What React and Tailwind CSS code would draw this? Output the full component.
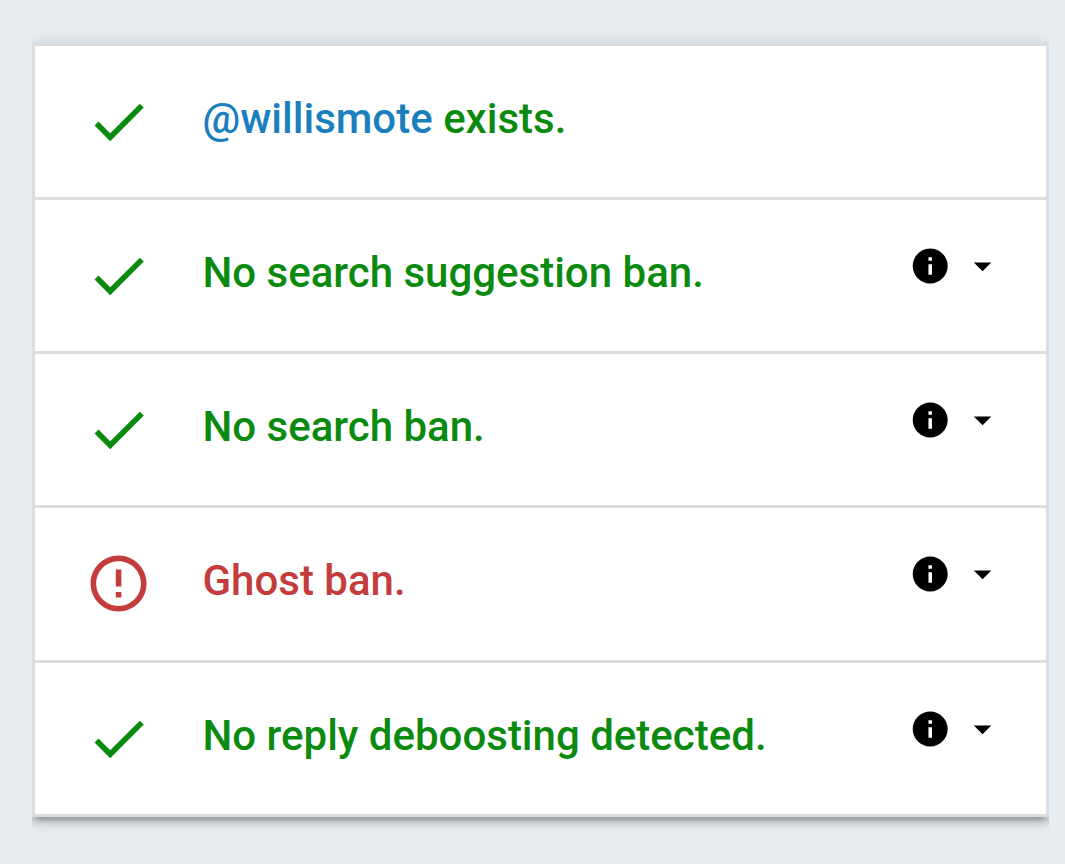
const rows = [
  { handle: '@willismote', text: ' exists.', ok: true, info: false },
  { text: 'No search suggestion ban.', ok: true, info: true },
  { text: 'No search ban.', ok: true, info: true },
  { text: 'Ghost ban.', ok: false, info: true },
  { text: 'No reply deboosting detected.', ok: true, info: true },
];

function Check() {
  return (
    <svg viewBox="0 0 24 24" className="size-[67.2px] fill-current">
      <path d="M9 16.17 4.83 12l-1.42 1.41L9 19 21 7l-1.41-1.41z" />
    </svg>
  );
}

function Warning() {
  return (
    <svg viewBox="0 0 24 24" className="size-[67.2px] fill-current">
      <path d="M11 15h2v2h-2zm0-8h2v6h-2zm.99-5C6.47 2 2 6.48 2 12s4.47 10 9.99 10C17.52 22 22 17.52 22 12S17.52 2 11.99 2M12 20c-4.42 0-8-3.58-8-8s3.58-8 8-8 8 3.58 8 8-3.58 8-8 8" />
    </svg>
  );
}

function Info() {
  return (
    <div className="flex items-center pt-[45px] pr-[42px] text-black">
      <svg viewBox="-0.12 0 24 24" className="size-[42px] fill-current">
        <path d="M12 2C6.48 2 2 6.48 2 12s4.48 10 10 10 10-4.480 10-10S17.520 2 12 2m1 15h-2v-6h2zm0-8h-2V7h2z" />
      </svg>
      <svg viewBox="0.25 0 24 24" className="ml-[11px] size-[42px] fill-current">
        <path d="m7 10 5 5 5-5z" />
      </svg>
    </div>
  );
}

export default function App() {
  return (
    <main className="h-[864px] w-[1065px] overflow-hidden bg-[#e6ecf0] pt-[43px] pl-8">
      <ul className="w-[1017px] border-[3px] border-[#dddddd] bg-white shadow-[0_5.6px_5.6px_0_rgba(0,0,0,0.14),0_8.4px_2.8px_-5.6px_rgba(0,0,0,0.12),0_2.8px_14px_0_rgba(0,0,0,0.2)] [clip-path:inset(-40px_0)]">
        {rows.map((row) => (
          <li
            key={row.text}
            className={`flex h-[154.15px] items-start border-b-[3px] border-[#dddddd] last:h-[151px] last:border-b-0 ${row.ok ? 'text-[#0a8a0f]' : 'text-[#c43d3d]'}`}
          >
            <div className="w-[118px] pt-[42px] pl-[50px]">{row.ok ? <Check /> : <Warning />}</div>
            <p className="flex-1 pt-[41px] pl-[49.5px] font-['Roboto',sans-serif] text-[42px] leading-[63px] font-medium whitespace-nowrap">
              {row.handle && <span className="text-[#1a80bd]">{row.handle}</span>}
              {row.text}
            </p>
            {row.info && <Info />}
          </li>
        ))}
      </ul>
    </main>
  );
}
